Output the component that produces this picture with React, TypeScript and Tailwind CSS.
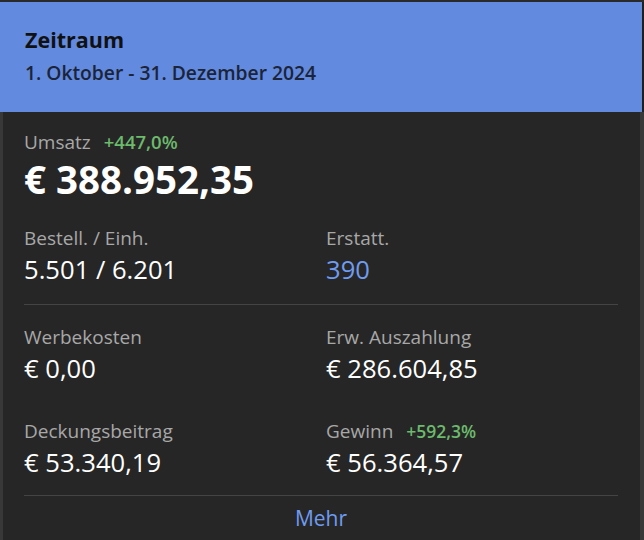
const FONT = { fontFamily: '"Open Sans", "Noto Sans", sans-serif' }

type Metric = { label: string; value: string; delta?: string; accent?: boolean }

function MetricCell({ m }: { m: Metric }) {
  return (
    <div className="flex flex-col">
      <div className="flex items-baseline gap-[13px]">
        <span className="text-[19px] leading-[26px] text-[#a8a8a8]">{m.label}</span>
        {m.delta && <span className="text-[17.5px] leading-[26px] font-semibold text-[#6cba6c]">{m.delta}</span>}
      </div>
      <span className={`mt-[2px] text-[25.6px] leading-[34px] ${m.accent ? "text-[#6f9cf0]" : "text-white"}`}>
        {m.value}
      </span>
    </div>
  )
}

const TOP: Metric[] = [
  { label: "Bestell. / Einh.", value: "5.501 / 6.201" },
  { label: "Erstatt.", value: "390", accent: true },
]

const BOTTOM: Metric[] = [
  { label: "Werbekosten", value: "€ 0,00" },
  { label: "Erw. Auszahlung", value: "€ 286.604,85" },
  { label: "Deckungsbeitrag", value: "€ 53.340,19" },
  { label: "Gewinn", value: "€ 56.364,57", delta: "+592,3%" },
]

export default function App() {
  return (
    <div style={FONT} className="w-[644px] h-[540px] overflow-hidden bg-[#262626] border-t-2 border-[#2a2a2a]">
      <div className="bg-[#628ade] border-r-2 border-[#1f1f1f] px-[25px] pt-[23px] h-[110px]">
        <h1 className="text-[21.5px] leading-[29px] font-bold text-[#111111]">Zeitraum</h1>
        <p className="mt-[6px] text-[19.25px] leading-[26px] font-semibold text-[#1b2438]">1. Oktober - 31. Dezember 2024</p>
      </div>
      <div className="h-full border-l-[3px] border-r-[4px] border-[#383838] pl-[21px] pr-[22px] pt-[17px]">
        <div className="flex items-baseline gap-[13px]">
          <span className="text-[19px] leading-[26px] text-[#a8a8a8]">Umsatz</span>
          <span className="text-[18.5px] leading-[26px] font-semibold text-[#6cba6c]">+447,0%</span>
        </div>
        <div className="text-[38.5px] leading-[48px] font-bold text-white">€ 388.952,35</div>

        <div className="mt-[22px] grid grid-cols-[302px_1fr] pb-[17px] border-b border-[#444444]">
          {TOP.map((m) => <MetricCell key={m.label} m={m} />)}
        </div>

        <div className="pt-[19px] grid grid-cols-[302px_1fr] gap-y-[32px] pb-[15px] border-b border-[#444444]">
          {BOTTOM.map((m) => <MetricCell key={m.label} m={m} />)}
        </div>

        <div className="pt-[8px] text-center text-[21px] leading-[28px] text-[#6f9cf0]">Mehr</div>
      </div>
    </div>
  )
}
